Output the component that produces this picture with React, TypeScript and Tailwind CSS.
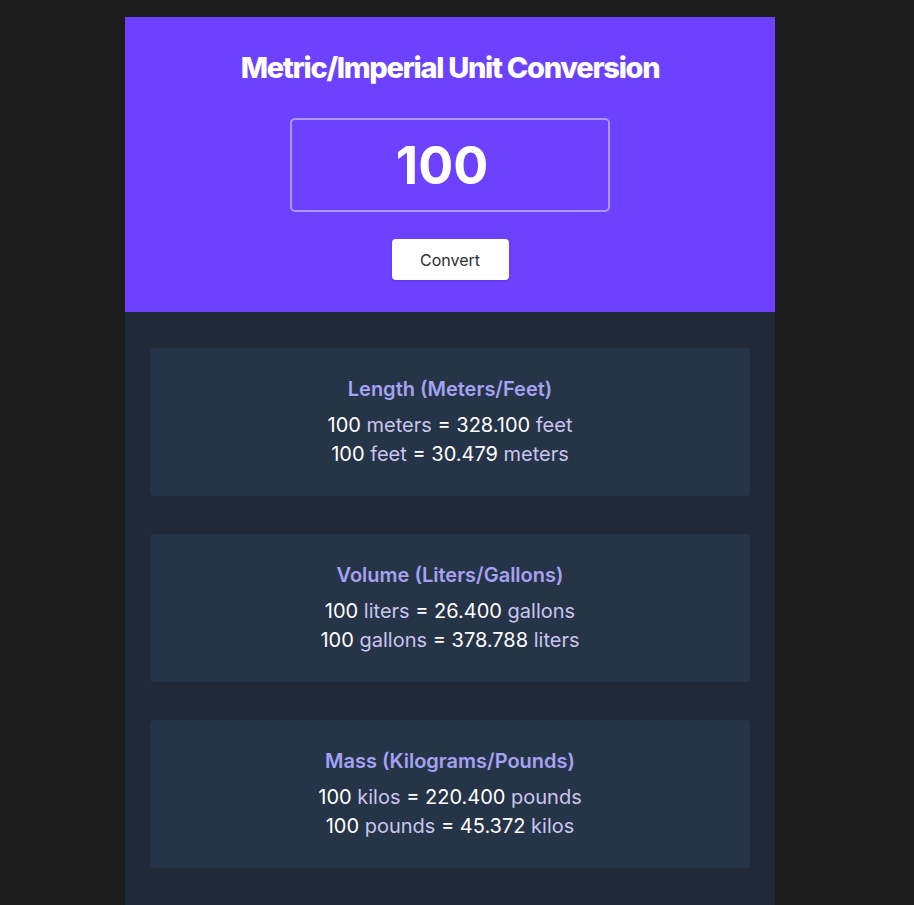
import React, { useState } from "react";

const font = { fontFamily: "Inter, 'Noto Sans', sans-serif" };

interface Row {
  a: string;
  b: string;
  c: string;
  d: string;
}

const ResultCard: React.FC<{ title: string; rows: Row[] }> = ({ title, rows }) => {
  return (
    <div className="bg-[#263447] rounded-[4px] pt-[27px] pb-[27px] flex flex-col items-center">
      <h2 className="text-[20px] leading-[28px] font-semibold text-[#a5a2f2]">{title}</h2>
      <div className="mt-[8px] flex flex-col items-center">
        {rows.map((r, i) => (
          <p key={i} className="text-[20px] leading-[29px] text-white">
            {r.a} <span className="text-[#c9c6ee]">{r.b}</span> = {r.c}{" "}
            <span className="text-[#c9c6ee]">{r.d}</span>
          </p>
        ))}
      </div>
    </div>
  );
};

export default function App() {
  const [value, setValue] = useState("100");
  const n = parseFloat(value) || 0;
  const f = (x: number) => x.toFixed(3);

  return (
    <div className="min-h-[905px] bg-[#1c1c1c] pt-[17px] pr-[14px]" style={font}>
      <div className="w-[650px] mx-auto bg-[#1f2937] min-h-[888px]">
        <header className="bg-[#6c41ff] h-[295px] flex flex-col items-center pt-[34px]">
          <h1 className="text-[29px] leading-[34px] font-extrabold text-white tracking-[-0.045em]">
            Metric/Imperial Unit Conversion
          </h1>
          <input
            value={value}
            onChange={(e) => setValue(e.target.value)}
            className="mt-[33px] w-[320px] h-[94px] bg-transparent border-2 border-[#ab98ff] rounded-[5px] pr-[16px] text-center text-white text-[52px] font-bold outline-none"
          />
          <button className="mt-[27px] w-[117px] h-[41px] bg-white rounded-[4px] text-[16px] leading-[40px] text-[#2d2d2d] shadow-sm">
            Convert
          </button>
        </header>
        <main className="px-[25px] pt-[36px] pb-[36px] flex flex-col gap-[38px]">
          <ResultCard
            title="Length (Meters/Feet)"
            rows={[
              { a: value, b: "meters", c: f(n * 3.281), d: "feet" },
              { a: value, b: "feet", c: f(n / 3.281), d: "meters" },
            ]}
          />
          <ResultCard
            title="Volume (Liters/Gallons)"
            rows={[
              { a: value, b: "liters", c: f(n * 0.264), d: "gallons" },
              { a: value, b: "gallons", c: f(n / 0.264), d: "liters" },
            ]}
          />
          <ResultCard
            title="Mass (Kilograms/Pounds)"
            rows={[
              { a: value, b: "kilos", c: f(n * 2.204), d: "pounds" },
              { a: value, b: "pounds", c: f(n / 2.204), d: "kilos" },
            ]}
          />
        </main>
      </div>
    </div>
  );
}
